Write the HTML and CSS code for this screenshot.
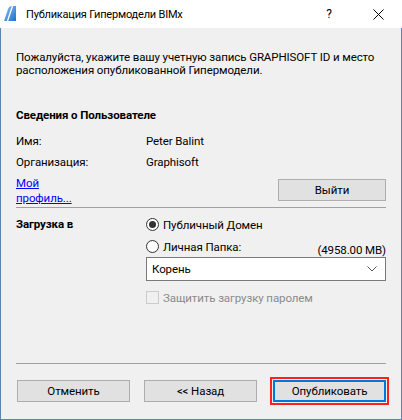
FILE: index.html
```html
<!DOCTYPE html>
<html lang="ru">
<head>
<meta charset="utf-8">
<link rel="stylesheet" href="styles.css">
</head>
<body>
<div class="window">
  <div class="titlebar">
    <svg class="app-icon" width="12" height="15" viewBox="0 0 12 15">
      <defs>
        <linearGradient id="g" x1="0" y1="0" x2="1" y2="1">
          <stop offset="0" stop-color="#8fc3f0"/>
          <stop offset="1" stop-color="#1c6fd0"/>
        </linearGradient>
      </defs>
      <path d="M0 15 L4 3 Q5 0 8 0 L12 0 L12 15 Z" fill="url(#g)"/>
      <path d="M3.5 15 L8.5 0" stroke="#ffffff" stroke-width="1.3"/>
    </svg>
    <span class="title">Публикация Гипермодели BIMx</span>
    <span class="help">?</span>
    <svg class="close" width="11" height="11" viewBox="0 0 11 11">
      <path d="M0.5 0.5 L10.5 10.5 M10.5 0.5 L0.5 10.5" stroke="#000" stroke-width="1"/>
    </svg>
  </div>
  <div class="content">
    <p class="intro">Пожалуйста, укажите вашу учетную запись GRAPHISOFT ID и место расположения опубликованной Гипермодели.</p>

    <div class="heading">Сведения о Пользователе</div>
    <div class="row first"><span class="label">Имя:</span><span>Peter Balint</span></div>
    <div class="row"><span class="label">Организация:</span><span>Graphisoft</span></div>
    <div class="profile-row">
      <a class="link" href="#">Мой<br>профиль...</a>
      <button class="btn logout">Выйти</button>
    </div>
    <div class="sep"></div>

    <div class="upload">
      <div class="heading upload-label">Загрузка в</div>
      <div class="upload-opts">
        <div class="radio-row"><span class="radio checked"></span><span>Публичный Домен</span></div>
        <div class="radio-row second"><span class="radio"></span><span>Личная Папка:</span><span class="quota">(4958.00 MB)</span></div>
        <div class="select"><span>Корень</span>
          <svg width="10" height="6" viewBox="0 0 10 6"><path d="M0.5 0.5 L5 5 L9.5 0.5" fill="none" stroke="#555" stroke-width="1"/></svg>
        </div>
        <div class="check-row"><span class="checkbox"></span><span>Защитить загрузку паролем</span></div>
      </div>
    </div>

    <div class="spacer"></div>
    <div class="sep"></div>
    <div class="buttons">
      <button class="btn">Отменить</button>
      <button class="btn">&lt;&lt; Назад</button>
      <button class="btn primary">Опубликовать</button>
    </div>
  </div>
</div>
</body>
</html>
```

FILE: styles.css
```css
* { box-sizing: border-box; }
html, body { margin: 0; padding: 0; }
body {
  width: 402px;
  height: 420px;
  background: #ffffff;
  font-family: Roboto, "Noto Sans", sans-serif;
  font-size: 11.5px;
  letter-spacing: -0.1px;
  color: #000;
}
.window {
  width: 402px;
  height: 420px;
  display: flex;
  flex-direction: column;
}
.titlebar {
  height: 28px;
  background: #ffffff;
  display: flex;
  align-items: center;
  padding-left: 4px;
}
.app-icon { margin-top: -2px; }
.title {
  margin-left: 10px;
  font-size: 11px;
  letter-spacing: -0.2px;
  flex: 1;
}
.help {
  width: 14px;
  text-align: center;
  margin-right: 37px;
  font-size: 12px;
}
.close { margin-right: 18px; }

.content {
  flex: 1;
  background: #f0f0f0;
  border: 1px solid #5d84b3;
  border-top: none;
  padding: 0 15px 17px 15px;
  display: flex;
  flex-direction: column;
}
.intro {
  margin: 23px 0 0 0;
  line-height: 13px;
}
.heading {
  font-weight: bold;
  line-height: 15px;
}
.content > .heading { margin-top: 31px; }
.row {
  display: flex;
  line-height: 15px;
  margin-top: 6px;
}
.row.first { margin-top: 11px; }
.label { width: 130px; }
.profile-row {
  display: flex;
  justify-content: space-between;
  align-items: flex-start;
  margin-top: 6px;
  height: 31px;
}
.link {
  display: block;
  color: #0000ff;
  line-height: 15px;
  text-decoration: underline;
}
.btn {
  font-family: inherit;
  font-size: 11.5px;
  letter-spacing: -0.1px;
  color: #000;
  background: #e1e1e1;
  border: 1px solid #adadad;
  height: 22px;
  width: 113px;
  padding: 0;
  margin: 0;
}
.logout {
  width: 108px;
  margin-top: 3px;
}
.sep {
  height: 1px;
  background: #a0a0a0;
}
.upload {
  display: flex;
  margin-top: 9px;
}
.upload-label { width: 130px; }
.upload-opts {
  flex: 1;
  display: flex;
  flex-direction: column;
}
.radio-row {
  display: flex;
  align-items: center;
  height: 15px;
}
.radio-row.second { margin-top: 7px; }
.radio {
  width: 13px;
  height: 13px;
  border: 1px solid #333;
  border-radius: 50%;
  background: #fff;
  margin-right: 4px;
  display: flex;
  align-items: center;
  justify-content: center;
}
.radio.checked::after {
  content: "";
  width: 7px;
  height: 7px;
  border-radius: 50%;
  background: #333;
}
.quota {
  margin-left: auto;
  position: relative;
  top: 3px;
}
.select {
  margin-top: 3px;
  height: 24px;
  background: #fff;
  border: 1px solid #7a7a7a;
  display: flex;
  align-items: center;
  justify-content: space-between;
  padding: 0 8px 0 5px;
}
.check-row {
  display: flex;
  align-items: center;
  margin-top: 9px;
  height: 15px;
  color: #8b8b8b;
}
.checkbox {
  width: 13px;
  height: 13px;
  border: 1px solid #cccccc;
  background: #f0f0f0;
  margin-right: 4px;
}
.spacer { flex: 1; }
.buttons {
  display: flex;
  margin-top: 16px;
  padding-left: 1px;
}
.buttons .btn + .btn { margin-left: 14px; }
.buttons .btn.primary {
  margin-left: 16px;
  border: 2px solid #0078d7;
  outline: 2px solid #ff2020;
  outline-offset: 1px;
}
```
